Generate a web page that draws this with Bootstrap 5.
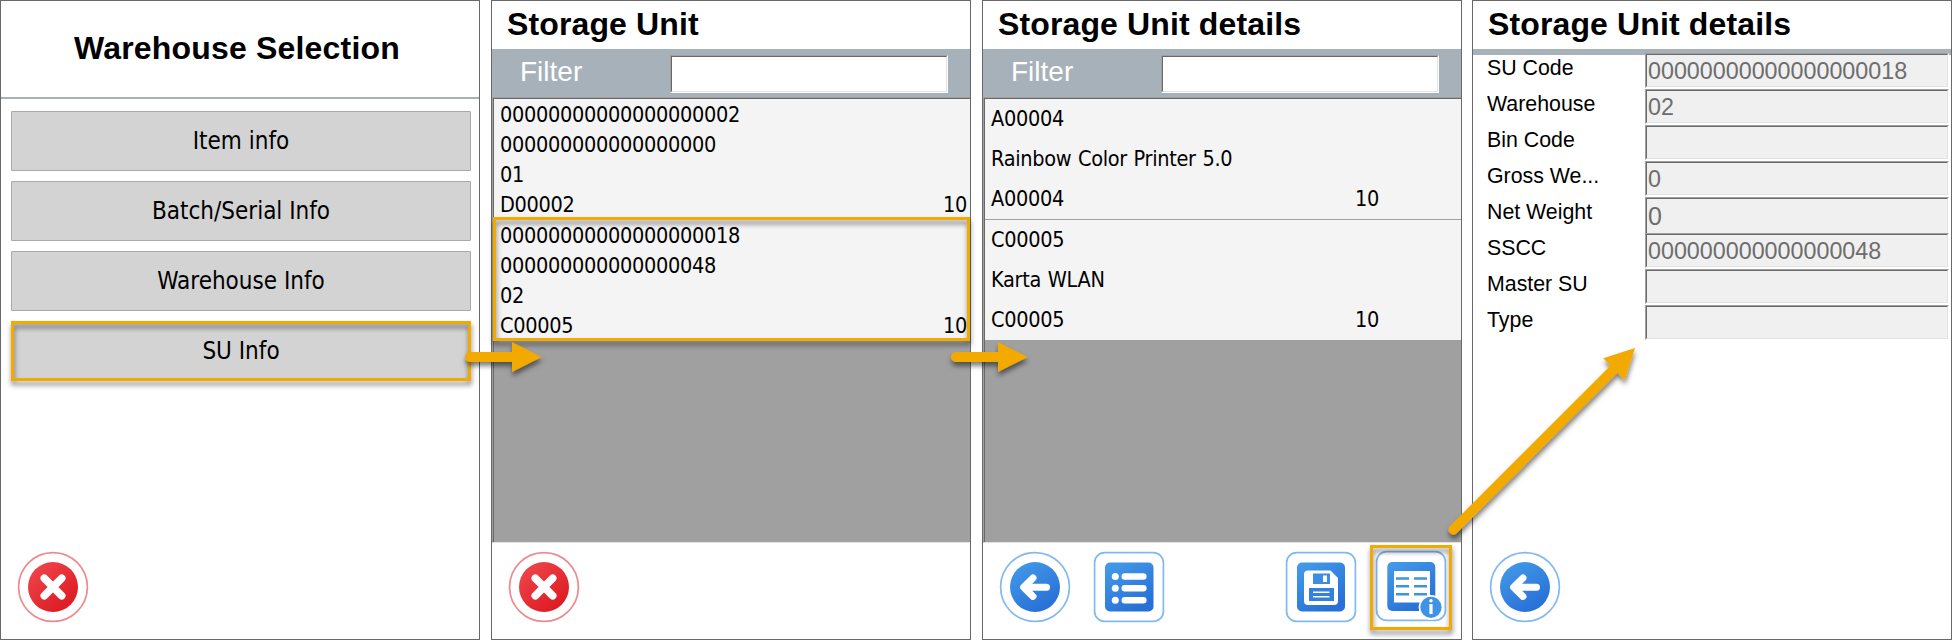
<!DOCTYPE html>
<html lang="en">
<head>
<meta charset="utf-8">
<title>Warehouse Selection</title>
<link rel="stylesheet" href="https://cdn.jsdelivr.net/npm/bootstrap@5.3.0/dist/css/bootstrap.min.css">
<style>
  body { font-family: "Liberation Sans", Arial, sans-serif; color: #000; width: 1952px; height: 640px; background: #fff; }
  .screens { height: 640px; column-gap: 11px; }
  .screen { width: 480px; height: 640px; border: 1px solid #696969; flex: none; }
  .screen.last { margin-left: -1px; }
  .tahoma { font-family: "DejaVu Sans Condensed", "DejaVu Sans", sans-serif; font-stretch: condensed; }
  .head-tall { height: 98px; border-bottom: 2px solid #a6b1ba; font-size: 32px; line-height: 94px; padding-right: 6px; letter-spacing: .18px; }
  .head { height: 48px; font-size: 32px; line-height: 46px; padding-left: 15px; letter-spacing: .13px; }
  .menu-list { padding: 12px 8px 0 10px; gap: 10px; }
  .menu-item { height: 60px; border: 1px solid #a9a9a9; border-radius: 1px; background: #d3d3d3; color: #000; font-size: 24px; line-height: 58px; padding: 0; }
  .filterbar { height: 48px; background: #a6b1ba; padding: 6px 21px 0 28px; }
  .filterbar label { color: #fff; font-size: 28px; line-height: 34px; width: 150px; flex: none; }
  .sunken { border: 1px solid; border-color: #a0a0a0 #fff #fff #a0a0a0; flex: none; }
  .sunken > div { height: 100%; border: 1px solid; border-color: #696969 #e3e3e3 #e3e3e3 #696969; background: #fff; }
  .filterbar .sunken { width: 278px; height: 38px; }
  .records { height: 446px; border-left: 1px solid #a0a0a0; border-top: 1px solid #a0a0a0; border-bottom: 1px solid #e3e3e3; background: #a0a0a0; }
  .records-in { height: 100%; border-left: 1px solid #696969; border-top: 1px solid #696969; }
  .record { height: 121px; background: #f4f4f4; font-size: 21.5px; letter-spacing: -.3px; word-spacing: .8px; line-height: 30px; padding: 1px 3px 0 6px; }
  .record.loose { line-height: 40px; border-bottom: 1px solid #a0a0a0; padding-top: 0; padding-right: 82px; }
  .tools { height: 96px; padding: 8px 14px 0 16px; }
  .tools svg { display: block; flex: none; }
  .tools .second { margin-left: 22px; }
  .tools .fourth { margin: -1px 0 0 18px; }
  .band { height: 4px; background: #a6b1ba; }
  .fields { background: linear-gradient(#a6b1ba 2px, #fff 2px); padding: 0 2px 0 14px; }
  .frow { height: 36px; }
  .frow label { width: 158px; font-size: 21.33px; line-height: 29px; padding-top: 1px; }
  .frow .sunken { width: 304px; height: 35px; }
  .frow .sunken > div { background: #f0f0f0; color: #6d6d6d; font-size: 23.3px; line-height: 32px; padding-left: 1px; }
  .frow .sunken.tall { height: 37px; border-bottom: 0; }
  .frow .sunken.tall > div { font-size: 25px; line-height: 34px; }
  .overlay { position: absolute; left: 0; top: 0; pointer-events: none; }
</style>
</head>
<body class="position-relative overflow-hidden">
<svg width="0" height="0" class="position-absolute">
  <defs>
    <linearGradient id="blue" x1="0" y1="0" x2=".6" y2="1"><stop offset="0" stop-color="#459de9"/><stop offset="1" stop-color="#2870d7"/></linearGradient>
    <linearGradient id="red" x1="0" y1="0" x2=".8" y2="1"><stop offset="0" stop-color="#f04a4f"/><stop offset="1" stop-color="#dc1820"/></linearGradient>
    <symbol id="close" viewBox="0 0 72 72">
      <circle cx="36" cy="36" r="34.4" fill="#fff" stroke="#ee8a8e" stroke-width="1.7"/>
      <circle cx="36" cy="36" r="25" fill="url(#red)"/>
      <path d="M27.3 27.3 44.7 44.7M44.7 27.3 27.3 44.7" stroke="#fff" stroke-width="7.6" stroke-linecap="round"/>
    </symbol>
    <symbol id="back" viewBox="0 0 72 72">
      <circle cx="36" cy="36" r="34.4" fill="#fff" stroke="#82baf0" stroke-width="1.7"/>
      <circle cx="36" cy="36" r="25" fill="url(#blue)"/>
      <path d="M34 27 24.6 36.2 34 45.4M25 36.2H47.5" fill="none" stroke="#fff" stroke-width="7" stroke-linecap="round" stroke-linejoin="round"/>
    </symbol>
    <symbol id="list" viewBox="0 0 72 72">
      <rect x="1.6" y="1.6" width="68.8" height="68.8" rx="10" fill="#fff" stroke="#82baf0" stroke-width="1.7"/>
      <rect x="12" y="11.5" width="48.5" height="49" rx="5" fill="url(#blue)"/>
      <g fill="#fff"><circle cx="22.3" cy="25.5" r="3.5"/><circle cx="22.3" cy="37.3" r="3.5"/><circle cx="22.3" cy="49.3" r="3.5"/></g>
      <path d="M31.8 25.5H50.3M31.8 37.3H50.3M31.8 49.3H50.3" stroke="#fff" stroke-width="6.6" stroke-linecap="round"/>
    </symbol>
    <symbol id="save" viewBox="0 0 72 72">
      <rect x="1.6" y="1.6" width="68.8" height="68.8" rx="10" fill="#fff" stroke="#82baf0" stroke-width="1.7"/>
      <rect x="12" y="11.5" width="48" height="49" rx="5" fill="url(#blue)"/>
      <path d="M23 19.5H45.5L53 27V50Q53 54 49 54H23Q19 54 19 50V23.5Q19 19.5 23 19.5Z" fill="#fff"/>
      <rect x="28" y="22.5" width="17" height="10.5" fill="#3b8de3"/><rect x="38" y="24.5" width="4" height="6.5" fill="#fff"/>
      <rect x="24" y="37" width="25" height="13" fill="#3380df"/><path d="M28 41.2H44.5M28 45.7H44.5" stroke="#fff" stroke-width="1.6"/>
    </symbol>
    <symbol id="info" viewBox="0 0 72 72">
      <rect x="1.6" y="1.6" width="68.8" height="68.8" rx="10" fill="#fff" stroke="#82baf0" stroke-width="1.7"/>
      <rect x="12.3" y="12" width="48" height="49" rx="5" fill="url(#blue)"/>
      <rect x="19" y="21" width="36" height="31.5" fill="#fff"/>
      <path d="M21 28.5H34M39 28.5H52M21 36.3H34M39 36.3H52M21 44.3H34M39 44.3H52" stroke="#3f92e5" stroke-width="2.6"/>
      <circle cx="56" cy="57.3" r="12.3" fill="#fff"/><circle cx="56" cy="57.3" r="10.6" fill="#3f92e5"/>
      <circle cx="56" cy="50.8" r="1.7" fill="#fff"/><rect x="54.4" y="54" width="3.2" height="10" fill="#fff"/>
    </symbol>
    <filter id="shade" filterUnits="userSpaceOnUse" x="0" y="0" width="1952" height="640"><feDropShadow dx="0.5" dy="4" stdDeviation="2.5" flood-color="#000" flood-opacity=".5"/></filter>
  </defs>
</svg>

<main class="screens d-flex">
  <section class="screen d-flex flex-column">
    <h1 class="head-tall fw-bold text-center m-0">Warehouse Selection</h1>
    <div class="menu-list tahoma d-grid">
      <button class="btn menu-item">Item info</button>
      <button class="btn menu-item">Batch/Serial Info</button>
      <button class="btn menu-item">Warehouse Info</button>
      <button class="btn menu-item">SU Info</button>
    </div>
    <div class="tools d-flex mt-auto"><svg width="72" height="72"><use href="#close"/></svg></div>
  </section>

  <section class="screen">
    <h2 class="head fw-bold m-0">Storage Unit</h2>
    <div class="filterbar d-flex"><label>Filter</label><div class="sunken"><div></div></div></div>
    <div class="records tahoma"><div class="records-in">
      <div class="record"><div>00000000000000000002</div><div>000000000000000000</div><div>01</div><div class="d-flex justify-content-between"><span>D00002</span><span>10</span></div></div>
      <div class="record"><div>00000000000000000018</div><div>000000000000000048</div><div>02</div><div class="d-flex justify-content-between"><span>C00005</span><span>10</span></div></div>
    </div></div>
    <div class="tools d-flex"><svg width="72" height="72"><use href="#close"/></svg></div>
  </section>

  <section class="screen">
    <h2 class="head fw-bold m-0">Storage Unit details</h2>
    <div class="filterbar d-flex"><label>Filter</label><div class="sunken"><div></div></div></div>
    <div class="records tahoma"><div class="records-in">
      <div class="record loose"><div>A00004</div><div>Rainbow Color Printer 5.0</div><div class="d-flex justify-content-between"><span>A00004</span><span>10</span></div></div>
      <div class="record loose"><div>C00005</div><div>Karta WLAN</div><div class="d-flex justify-content-between"><span>C00005</span><span>10</span></div></div>
    </div></div>
    <div class="tools d-flex">
      <svg width="72" height="72"><use href="#back"/></svg>
      <svg class="second" width="72" height="72"><use href="#list"/></svg>
      <svg class="ms-auto" width="72" height="72"><use href="#save"/></svg>
      <svg class="fourth" width="72" height="72"><use href="#info"/></svg>
    </div>
  </section>

  <section class="screen last d-flex flex-column">
    <h2 class="head fw-bold m-0">Storage Unit details</h2>
    <div class="band"></div>
    <div class="fields">
      <div class="frow d-flex"><label>SU Code</label><div class="sunken"><div>00000000000000000018</div></div></div>
      <div class="frow d-flex"><label>Warehouse</label><div class="sunken"><div>02</div></div></div>
      <div class="frow d-flex"><label>Bin Code</label><div class="sunken"><div></div></div></div>
      <div class="frow d-flex"><label>Gross We...</label><div class="sunken"><div>0</div></div></div>
      <div class="frow d-flex"><label>Net Weight</label><div class="sunken tall"><div>0</div></div></div>
      <div class="frow d-flex"><label>SSCC</label><div class="sunken"><div>000000000000000048</div></div></div>
      <div class="frow d-flex"><label>Master SU</label><div class="sunken"><div></div></div></div>
      <div class="frow d-flex"><label>Type</label><div class="sunken"><div></div></div></div>
    </div>
    <div class="tools d-flex mt-auto"><svg width="72" height="72"><use href="#back"/></svg></div>
  </section>
</main>

<!-- Callout frames and arrows drawn over the four screens -->
<svg class="overlay" width="1952" height="640" viewBox="0 0 1952 640">
  <g fill="none" stroke="#f2a900" stroke-width="3" filter="url(#shade)">
    <rect x="12.5" y="322.5" width="457" height="57"/>
    <rect x="494.5" y="218.5" width="474" height="121"/>
    <rect x="1371.5" y="546.5" width="79" height="82"/>
  </g>
  <g fill="#f2a900" filter="url(#shade)">
    <path d="M470 352H512V342L541.7 357 512 372V362H470A5 5 0 0 1 470 352Z"/>
    <path d="M956 352H998V342L1027.7 357 998 372V362H956A5 5 0 0 1 956 352Z"/>
    <path d="M1449.5 526.5 1610.3 365.7 1603.3 358.3 1635 348 1624.7 380.3 1617.5 372.8 1456.5 533.5A5 5 0 0 1 1449.5 526.5Z"/>
  </g>
</svg>
<script src="https://cdn.jsdelivr.net/npm/bootstrap@5.3.0/dist/js/bootstrap.bundle.min.js"></script>
</body>
</html>
